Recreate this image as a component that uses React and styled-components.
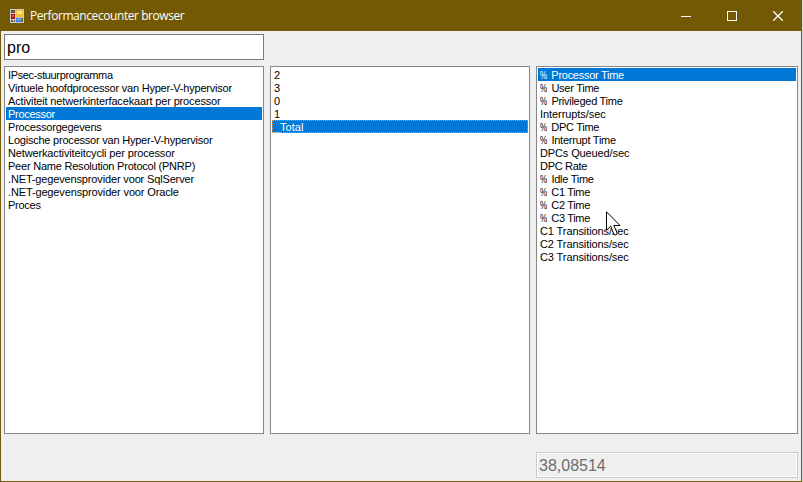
import React from "react";
import styled, { createGlobalStyle } from "styled-components";

const Global = createGlobalStyle`
  * { box-sizing: border-box; }
  body { margin: 0; background: #d8d8d8; overflow: hidden; }
`;

const Window = styled.div`
  position: relative;
  width: 802px;
  height: 482px;
  display: flex;
  flex-direction: column;
  background: #efefef;
  border: 1px solid #735903;
  border-top: 0;
  font-family: "Liberation Sans", Arial, sans-serif;
  color: #000;
`;

const TitleBar = styled.header`
  flex: 0 0 31px;
  display: flex;
  align-items: center;
  padding-left: 9px;
  background: #735903;
`;

const Title = styled.h1`
  flex: 1;
  margin: 0 0 0 6px;
  font: 400 12px/16px "Open Sans", "Noto Sans", sans-serif;
  letter-spacing: -0.43px;
  color: #fff;
`;

const CaptionButton = styled.button`
  width: 46px;
  height: 30px;
  padding: 0;
  border: 0;
  background: transparent;
  display: grid;
  place-items: center;

  svg {
    display: block;
  }
`;

const Content = styled.main`
  flex: 1;
  display: grid;
  grid-template-columns: 260px 260px 262px;
  grid-template-rows: 26px 6px 368px 18px 26px;
  column-gap: 6px;
  padding: 3px 3px 0;
`;

const TextBox = styled.input`
  grid-row: ${(p) => p.$row};
  grid-column: ${(p) => p.$column};
  width: 100%;
  height: 26px;
  margin: 0;
  padding: 2px 2px 0;
  border: 1px solid #7a7a7a;
  border-radius: 0;
  outline: 0;
  background: #fff;
  font: 400 16px/22px "Liberation Sans", Arial, sans-serif;
  color: #000;

  &:disabled {
    border-color: #cccccc;
    background: #efefef;
    box-shadow: inset 0 0 0 1px #fff;
    color: #6d6d6d;
  }
`;

const ListBox = styled.ul`
  grid-row: 3;
  margin: 0;
  padding: 1px;
  list-style: none;
  border: 1px solid #828790;
  background: #fff;
`;

const Item = styled.li`
  height: 13px;
  padding-left: 2px;
  font-size: 11px;
  line-height: 15px;
  white-space: pre;
  letter-spacing: ${(p) => p.$spacing}px;
  color: ${(p) => (p.$selected ? "#fff" : "#000")};
  background: ${(p) => (p.$selected ? "#0078d7" : "transparent")};
  outline: ${(p) => (p.$focused ? "1px dotted #ff8728" : "none")};
  outline-offset: -1px;
`;

const Percent = styled.span`
  display: inline-block;
  width: 8.6px;
  transform: scaleX(0.8);
  transform-origin: 0 50%;
  font-size: 10px;
`;

const Pointer = styled.svg`
  position: absolute;
  left: 605px;
  top: 211px;
`;

const categories = [
  ["IPsec-stuurprogramma", -0.36],
  ["Virtuele hoofdprocessor van Hyper-V-hypervisor", -0.22],
  ["Activiteit netwerkinterfacekaart per processor", -0.15],
  ["Processor", -0.28],
  ["Processorgegevens", -0.21],
  ["Logische processor van Hyper-V-hypervisor", -0.22],
  ["Netwerkactiviteitcycli per processor", -0.14],
  ["Peer Name Resolution Protocol (PNRP)", -0.22],
  [".NET-gegevensprovider voor SqlServer", -0.15],
  [".NET-gegevensprovider voor Oracle", -0.14],
  ["Proces", -0.27],
];

const instances = [["2", 0], ["3", 0], ["0", 0], ["1", 0], ["_Total", 0]];

const counters = [
  ["% Processor Time", -0.28],
  ["% User Time", -0.26],
  ["% Privileged Time", -0.27],
  ["Interrupts/sec", -0.07],
  ["% DPC Time", -0.3],
  ["% Interrupt Time", -0.24],
  ["DPCs Queued/sec", -0.12],
  ["DPC Rate", -0.3],
  ["% Idle Time", -0.26],
  ["% C1 Time", -0.33],
  ["% C2 Time", -0.33],
  ["% C3 Time", -0.33],
  ["C1 Transitions/sec", -0.1],
  ["C2 Transitions/sec", -0.1],
  ["C3 Transitions/sec", -0.1],
];

function Label({ text }) {
  if (!text.startsWith("%")) return text;
  return (
    <>
      <Percent>%</Percent>
      {text.slice(1)}
    </>
  );
}

function List({ items, selected, focused }) {
  return (
    <ListBox>
      {items.map(([label, spacing]) => (
        <Item
          key={label}
          $spacing={spacing}
          $selected={label === selected}
          $focused={focused && label === selected}
        >
          <Label text={label} />
        </Item>
      ))}
    </ListBox>
  );
}

function FormIcon() {
  return (
    <svg width="14" height="14" viewBox="0 0 14 14" shapeRendering="crispEdges">
      <path d="M0 0h14v14H0z" fill="#c9c9c9" />
      <path d="M1 1h4v3H1zM1 11h2v2H1zM4 11h1v2H4zM12 9h1v4h-1z" fill="#6b5a2a" />
      <path d="M6 1h7v7H6z" fill="#f6bd38" />
      <path d="M7 2h5v3H7z" fill="#ffe79a" />
      <path d="M1 5h4v5H1z" fill="#a81414" />
      <path d="M2 6h2v2H2z" fill="#e8604c" />
      <path d="M6 9h6v4H6z" fill="#3f80d8" />
      <path d="M7 10h4v1H7z" fill="#93c0f6" />
    </svg>
  );
}

export default function App() {
  return (
    <>
      <Global />
      <Window>
        <TitleBar>
          <FormIcon />
          <Title>Performancecounter browser</Title>
          <CaptionButton aria-label="Minimize">
            <svg width="10" height="10" shapeRendering="crispEdges">
              <path d="M0 5.5h10" stroke="#fff" />
            </svg>
          </CaptionButton>
          <CaptionButton aria-label="Maximize">
            <svg width="10" height="10" shapeRendering="crispEdges">
              <path d="M.5 .5h9v9h-9z" fill="none" stroke="#fff" />
            </svg>
          </CaptionButton>
          <CaptionButton aria-label="Close">
            <svg width="10" height="10">
              <path d="M.2 .2l9.6 9.6M9.8 .2L.2 9.8" stroke="#fff" strokeWidth="1.3" />
            </svg>
          </CaptionButton>
        </TitleBar>
        <Content>
          <TextBox $row={1} $column={1} defaultValue="pro" />
          <List items={categories} selected="Processor" />
          <List items={instances} selected="_Total" focused />
          <List items={counters} selected="% Processor Time" />
          <TextBox $row={5} $column={3} defaultValue="38,08514" disabled />
        </Content>
        <Pointer width="16" height="26" viewBox="0 0 16 26">
          <path
            d="M.5 .8v18.4l4.2-4 3.2 8.2c.8 1.2 3.8.2 3.2-1.5l-3.3-7.4h6.2z"
            fill="#fff"
            stroke="#000"
          />
        </Pointer>
      </Window>
    </>
  );
}
